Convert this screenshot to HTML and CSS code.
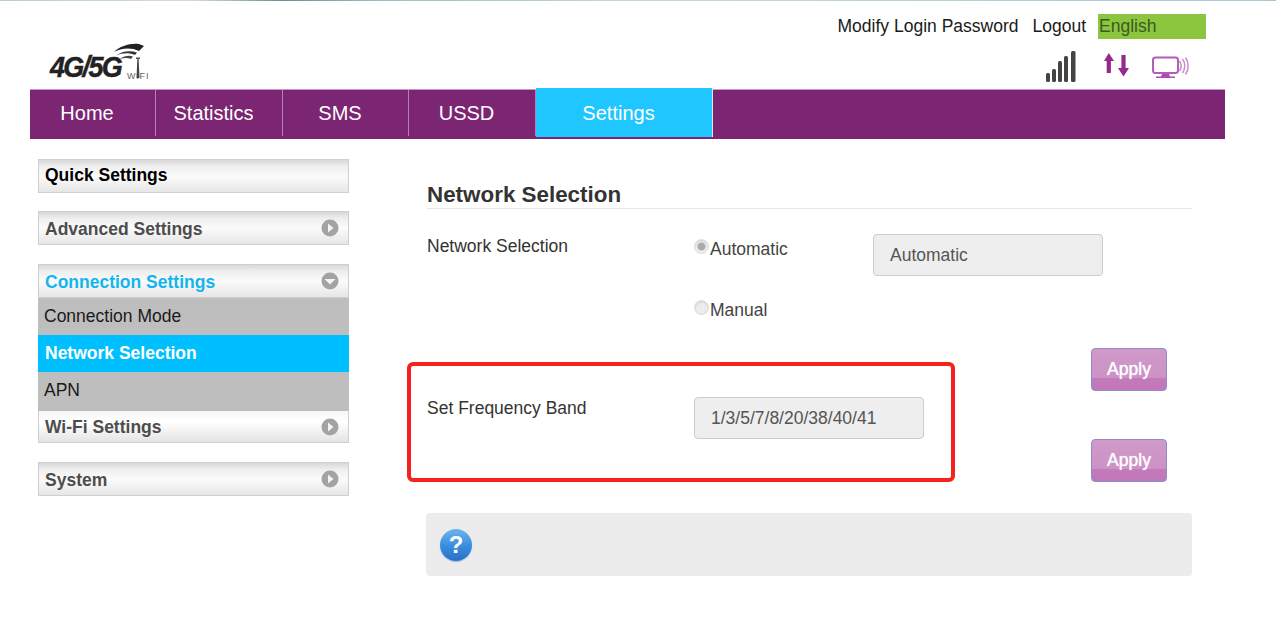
FILE: index.html
```html
<!DOCTYPE html>
<html>
  <head>
    <title>4G/5G WiFi - Network Selection</title>
    <link rel="stylesheet" href="styles.css">
  </head>
  <body>
    <svg class="icon-defs" width="0" height="0">
      <symbol id="arrow-right" viewBox="0 0 18 18">
        <circle cx="9" cy="9" r="8.5" fill="#a3a3a3"/>
        <path d="M7 4.5 L12.5 9 L7 13.5 Z" fill="#f4f4f4"/>
      </symbol>
      <symbol id="arrow-down" viewBox="0 0 18 18">
        <circle cx="9" cy="9" r="8.5" fill="#a3a3a3"/>
        <path d="M3.5 7 L14.5 7 L9 12.5 Z" fill="#f4f4f4"/>
      </symbol>
    </svg>

    <div class="top-strip"></div>

    <div id="page">
      <div class="top-links">
        <a class="top-link">Modify Login Password</a>
        <a class="top-link">Logout</a>
        <div class="lang-select">English</div>
      </div>

      <div class="brand-row">
        <div class="logo">
          <span class="logo-text">4G/5G</span>
          <span class="logo-wifi">WiFi</span>
          <svg class="logo-waves" width="32" height="36" viewBox="0 0 32 36">
            <path d="M0 9 C6 3 16 0 25 1 L30 3 L25 8 C17 4 7 5 0 9 Z" fill="#222"/>
            <path d="M2 12.500 C8 8 16 7 23 9.500 L21 12 C15 9.500 8 10 2 12.500 Z" fill="#333"/>
            <path d="M6 16 C10 13 15 12 19 13.500 L17 16 C14 14.500 10 15 6 16 Z" fill="#444"/>
            <path d="M23.400 15 L24.600 15 L25.500 35 L22.500 35 Z" fill="#444"/>
            <rect x="22" y="14.500" width="4" height="1.500" fill="#555"/>
          </svg>
        </div>
        <div class="status-icons">
          <svg width="30" height="31" viewBox="0 0 30 31">
            <rect x="0" y="22" width="4" height="9" rx="1.5" fill="#444"/>
            <rect x="6" y="18" width="4" height="13" rx="1.5" fill="#444"/>
            <rect x="12" y="10" width="4" height="21" rx="1.5" fill="#444"/>
            <rect x="18" y="5" width="4" height="26" rx="1.5" fill="#444"/>
            <rect x="25" y="0" width="4.5" height="31" rx="1.5" fill="#444"/>
          </svg>
          <svg class="icon-data" width="25" height="24" viewBox="0 0 25 24">
            <path d="M4.800 0 L10 8 L6.900 8 L6.900 20 L2.700 20 L2.700 8 L0 8 Z" fill="#932a8e"/>
            <path d="M19.500 23.500 L14 15 L17.400 15 L17.400 2 L21.600 2 L21.600 15 L25 15 Z" fill="#932a8e"/>
          </svg>
          <svg class="icon-screen" width="37" height="23" viewBox="0 0 37 23">
            <rect x="1" y="1.500" width="25" height="15.500" rx="2.500" fill="none" stroke="#b25dba" stroke-width="2"/>
            <path d="M10 18 L17 18 L18 20.500 L23 20.500 L23 22 L4 22 L4 20.500 L9 20.500 Z" fill="#a84fb0"/>
            <path d="M27.500 5 C29.500 8 29.500 12 27.500 15 M30.500 3 C33.500 7 33.500 13 30.500 17 M33.500 1.500 C37 6 37 14 33.500 18.500" fill="none" stroke="#c88bcd" stroke-width="1.500"/>
          </svg>
        </div>
      </div>

      <div id="nav">
        <a class="tab">Home</a>
        <a class="tab">Statistics</a>
        <a class="tab">SMS</a>
        <a class="tab">USSD</a>
        <a class="tab active">Settings</a>
      </div>

      <div id="content">
        <div id="sidebar">
          <div class="menu-group quick-group">
            <div class="menu-head quick">Quick Settings</div>
          </div>
          <div class="menu-group">
            <div class="menu-head">Advanced Settings<svg class="menu-arrow"><use href="#arrow-right"/></svg></div>
          </div>
          <div class="menu-group">
            <div class="menu-head open">Connection Settings<svg class="menu-arrow"><use href="#arrow-down"/></svg></div>
            <div class="menu-item">Connection Mode</div>
            <div class="menu-item selected">Network Selection</div>
            <div class="menu-item apn">APN</div>
            <div class="menu-head wifi">Wi-Fi Settings<svg class="menu-arrow"><use href="#arrow-right"/></svg></div>
          </div>
          <div class="menu-group">
            <div class="menu-head">System<svg class="menu-arrow"><use href="#arrow-right"/></svg></div>
          </div>
        </div>

        <div id="main-content">
          <div class="form-area">
            <h2 class="section-title">Network Selection</h2>

            <div class="form-row mode-row">
              <div class="field-label">Network Selection</div>
              <label class="radio-option"><span class="radio checked"></span>Automatic</label>
              <div class="readonly-box">Automatic</div>
            </div>
            <div class="form-row manual-row">
              <div class="field-label"></div>
              <label class="radio-option"><span class="radio"></span>Manual</label>
            </div>
            <div class="button-row first"><button class="apply-btn">Apply</button></div>

            <div class="form-row band-row">
              <div class="field-label">Set Frequency Band</div>
              <div class="readonly-box">1/3/5/7/8/20/38/40/41</div>
              <div class="red-mark"></div>
            </div>
            <div class="button-row"><button class="apply-btn">Apply</button></div>
          </div>

          <div class="help-box">
            <div class="help-icon">?</div>
          </div>
        </div>
      </div>
    </div>
  </body>
</html>
```

FILE: styles.css
```css
html, body { margin: 0; padding: 0; overflow: hidden; }
body { background: #fff; color: #333; font-family: "Liberation Sans", Arial, sans-serif; font-size: 17.5px; height: 620px; }

.icon-defs { position: absolute; }

.top-strip {
  height: 1px;
  background: linear-gradient(to right, #b9cdd6 0%, #cfdde2 15%, #6e8f96 22%, #9fbcc4 30%, #c6d8de 50%, #a9c6d2 100%);
}

#page { width: 1195px; margin-left: 30px; }

/* Header */
.top-links {
  display: flex;
  justify-content: flex-end;
  align-items: center;
  height: 25px;
  margin-top: 13px;
  padding-right: 19px;
}
.top-link { color: #1a1a1a; margin-right: 14px; white-space: nowrap; }
.top-link + .top-link { margin-right: 12px; }
.lang-select {
  width: 108px;
  height: 25px;
  line-height: 25px;
  background: #8cc63f;
  color: #3c5a22;
  padding-left: 1px;
  box-sizing: border-box;
}

.brand-row { display: flex; justify-content: space-between; height: 50px; }

.logo { position: relative; width: 130px; height: 50px; }
.logo-text {
  position: absolute;
  left: 20px;
  top: 11px;
  font-size: 27px;
  line-height: 34px;
  font-weight: bold;
  font-style: italic;
  letter-spacing: -1.700px;
  color: #222;
  transform: scaleY(1.1);
  -webkit-text-stroke: 0.400px #222;
}
.logo-wifi {
  position: absolute;
  left: 97px;
  top: 32px;
  font-size: 9px;
  line-height: 10px;
  letter-spacing: 0.800px;
  color: #666;
  text-transform: uppercase;
}
.logo-waves { position: absolute; left: 84px; top: 4px; }

.status-icons { display: flex; align-items: flex-start; padding-top: 12px; padding-right: 36px; }
.icon-data { margin-left: 28px; margin-top: 2px; }
.icon-screen { margin-left: 23px; margin-top: 5px; }

/* Nav bar */
#nav {
  display: flex;
  align-items: flex-start;
  height: 49px;
  background: #7b2573;
  border-top: 1px solid #c998c6;
}
.tab {
  box-sizing: border-box;
  width: 126px;
  height: 46px;
  line-height: 46px;
  padding-right: 11px;
  text-align: center;
  color: #fff;
  font-size: 20px;
  border-right: 1px solid #b383b0;
}
.tab:nth-child(even) { width: 127px; }
.tab.active {
  width: 177px;
  height: 49px;
  line-height: 50px;
  margin-top: -2px;
  background: #1fc6ff;
  border-right: 1px solid #e4e4e4;
}

/* Sidebar */
#content { display: flex; padding-left: 8px; }
#sidebar { width: 311px; padding-top: 20px; }
.menu-group { margin-bottom: 19px; }
.quick-group { margin-bottom: 18px; }
.menu-head {
  box-sizing: border-box;
  display: flex;
  justify-content: space-between;
  align-items: center;
  height: 34px;
  padding: 2px 9px 0 6px;
  border: 1px solid #cfcfcf;
  background: linear-gradient(to bottom, #d8d8d8 0%, #eee 20%, #fbfbfb 50%, #e6e6e6 100%);
  color: #4d4d4d;
  font-weight: bold;
}
.menu-head.quick { color: #000; padding: 0 9px 2px 6px; }
.menu-head.open { color: #13b5f1; }
.menu-head.wifi { height: 32px; border-top: none; background: linear-gradient(to bottom, #f6f6f6 0%, #fff 35%, #e4e4e4 100%); }
.menu-arrow { width: 18px; height: 18px; margin-top: -2px; }
.menu-item {
  height: 37px;
  line-height: 36px;
  padding-left: 6px;
  background: #bebebe;
  color: #1a1a1a;
}
.menu-item.selected { padding-left: 7px; background: #00bfff; color: #fff; font-weight: bold; }
.menu-item.apn { height: 39px; line-height: 36px; }

/* Main form */
#main-content { width: 766px; margin-left: 77px; padding-top: 41px; }
.form-area { padding-left: 1px; }
.section-title {
  margin: 0;
  height: 29px;
  line-height: 29px;
  font-size: 22.4px;
  font-weight: bold;
  border-bottom: 1px solid #e6e6e6;
  box-sizing: border-box;
  color: #333;
}

.form-row { display: grid; grid-template-columns: 267px 179px 230px; }
.mode-row { margin-top: 25px; height: 42px; }
.manual-row { margin-top: 22px; height: 24px; }
.band-row { position: relative; grid-template-columns: 267px 230px; margin-top: 6px; height: 42px; }

.field-label { line-height: 24px; color: #333; }
.band-row .field-label { line-height: 23px; }

.radio-option { display: flex; align-items: flex-start; height: 24px; line-height: 24px; color: #444; }
.mode-row .radio-option { margin-top: 3px; }
.radio {
  box-sizing: border-box;
  width: 15px;
  height: 15px;
  margin: 2px 1px 0 0;
  border-radius: 50%;
  border: 1px solid #ddd;
  background: #ececec;
  box-shadow: inset 0 1px 2px #ccc;
}
.radio.checked { background: radial-gradient(circle, #aaa 0, #aaa 3.500px, #eee 4.500px); }

.readonly-box {
  box-sizing: border-box;
  width: 230px;
  height: 42px;
  line-height: 40px;
  padding-left: 16px;
  background: #eee;
  border: 1px solid #ccc;
  border-radius: 4px;
  color: #555;
}

.button-row { display: flex; justify-content: flex-end; padding-right: 25px; }
.button-row.first { margin-top: 26px; }
.apply-btn {
  box-sizing: border-box;
  display: block;
  width: 76px;
  height: 43px;
  padding: 0;
  border: 1px solid #8d8fc0;
  border-radius: 4px;
  background: linear-gradient(to bottom, #d09ac9 0%, #cc92c5 70%, #c37abb 72%, #c177b9 100%);
  color: #fff;
  font-family: inherit;
  font-size: 17.5px;
  text-shadow: 0 0 1px #fff;
}

/* Red annotation drawn over the band row */
.red-mark {
  position: absolute;
  left: -20px;
  top: -35px;
  width: 548px;
  height: 120px;
  box-sizing: border-box;
  border: 4px solid #f5231c;
  border-radius: 6px;
}

.help-box {
  display: flex;
  align-items: center;
  height: 63px;
  margin-top: 31px;
  padding-left: 14px;
  box-sizing: border-box;
  background: #ececec;
  border-radius: 4px;
}
.help-icon {
  width: 32px;
  height: 32px;
  line-height: 32px;
  border-radius: 50%;
  text-align: center;
  color: #fff;
  font-size: 24px;
  font-weight: bold;
  background: linear-gradient(to bottom, #6fb3ee 0%, #3b8fe0 50%, #2a6fc4 100%);
  box-shadow: 0 1px 1px #9dbce0;
}
```
